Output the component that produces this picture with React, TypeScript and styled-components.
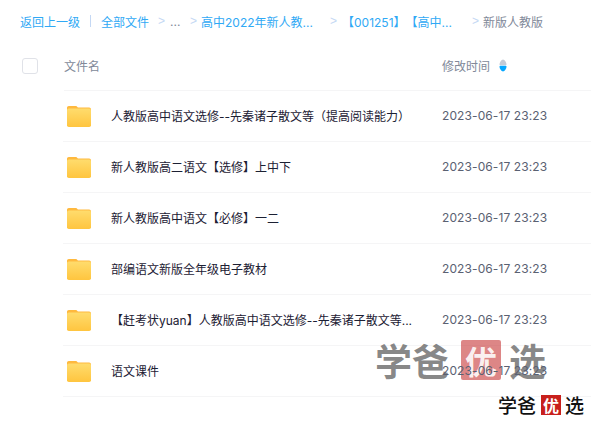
import React from "react";
import styled, { createGlobalStyle } from "styled-components";

const Global = createGlobalStyle`
  html, body { margin: 0; padding: 0; background: #fff; }
  body { font-family: "Inter", "Noto Sans CJK SC", sans-serif; width: 591px; height: 421px; overflow: hidden; text-spacing-trim: space-all; font-feature-settings: "chws" 0, "halt" 0; }
`;
const Page = styled.div`position: relative; width: 591px; height: 421px; overflow: hidden;`;
const Crumbs = styled.nav`
  display: flex; align-items: center; height: 42px; padding-left: 20px; font-size: 12px; white-space: nowrap;
`;
const CrumbLink = styled.span<{ $w: number; $muted?: boolean }>`
  width: ${p => p.$w}px; flex: none; color: ${p => (p.$muted ? "#818999" : "#30a9f5")}; overflow: hidden;
`;
const Bar = styled.span`width: 1px; height: 12px; background: #c4d8f4; margin: 0 10px 0 10px; flex: none;`;
const Sep = styled.span<{ $w: number }>`width: ${p => p.$w}px; flex: none; color: #c4d8f4; font-size: 12px; font-family: "Liberation Sans", sans-serif;`;
const HeaderRow = styled.div`display: flex; align-items: center; height: 49px; padding-left: 22px;`;
const Check = styled.span`
  width: 14px; height: 14px; border: 1px solid #e0e2e8; border-radius: 3px; flex: none; margin: 0 26px 2px 0;
`;
const HeadCell = styled.div<{ $w?: number }>`
  display: flex; align-items: center; height: 46px; padding-bottom: 2px; font-size: 12px; color: #818999;
  flex: ${p => (p.$w ? "none" : "1")}; width: ${p => (p.$w ? `${p.$w}px` : "auto")};
  border-bottom: 1px solid #f5f5f6;
`;
const Sort = styled.svg`width: 8px; height: 13px; margin-left: 9px; margin-top: 1px;`;
const Row = styled.div`
  display: flex; align-items: center; height: 49px; padding-bottom: 1px; margin-left: 63px; border-bottom: 1px solid #f5f5f6; font-size: 12px;
`;
const Folder = styled.svg`width: 24px; height: 21px; flex: none; margin: 1px 20px 0 4px;`;
const Name = styled.div`width: 331px; flex: none; color: #1c2033; white-space: nowrap; overflow: hidden;`;
const Time = styled.div`position: relative; z-index: 1; color: #5a6172; letter-spacing: 0.1px; white-space: nowrap;`;
const MarkBig = styled.div`
  position: absolute; left: 375px; top: 340px; display: flex; align-items: center;
  font-family: "Noto Sans CJK SC", sans-serif; font-size: 37px; font-weight: 700; line-height: 40px; color: rgba(90,90,90,0.72);
`;
const SealBig = styled.span`
  width: 40px; height: 40px; background: rgba(200,60,60,0.62); color: rgba(255,255,255,0.9); border-radius: 2px;
  display: flex; align-items: center; justify-content: center; font-size: 32px; margin: 0 8px 0 12px;
`;
const MarkSmall = styled.div`
  position: absolute; left: 498px; top: 394px; display: flex; align-items: center;
  font-family: "Noto Sans CJK SC", sans-serif; font-size: 19px; font-weight: 500; line-height: 22px; color: #111;
`;
const SealSmall = styled.span`
  width: 20px; height: 20px; background: #c8201c; color: #fff; font-size: 16px; font-weight: 700;
  display: flex; align-items: center; justify-content: center; margin: 0 4px 0 5px;
`;

const FolderIcon = () => (
  <Folder viewBox="0 0 24 21">
    <defs>
      <linearGradient id="fg" x1="0" y1="0" x2="0" y2="1">
        <stop offset="0" stopColor="#ffdc6d" />
        <stop offset="1" stopColor="#ffc53f" />
      </linearGradient>
    </defs>
    <path d="M1.8 0h6.7c1.2 0 1.7.6 2.4 1.5h11.3C23.2 1.5 24 2.3 24 3.5V8H0V1.8C0 .8.8 0 1.8 0z" fill="#ffb93e" />
    <rect x="0" y="2.5" width="24" height="18.5" rx="1.8" fill="url(#fg)" />
  </Folder>
);

const names = [
  "人教版高中语文选修--先秦诸子散文等（提高阅读能力）",
  "新人教版高二语文【选修】上中下",
  "新人教版高中语文【必修】一二",
  "部编语文新版全年级电子教材",
  "【赶考状yuan】人教版高中语文选修--先秦诸子散文等...",
  "语文课件",
];

export default function App() {
  return (
    <Page>
      <Global />
      <Crumbs>
        <CrumbLink $w={60}>返回上一级</CrumbLink>
        <Bar />
        <CrumbLink $w={57}>全部文件</CrumbLink>
        <Sep $w={12}>&gt;</Sep>
        <CrumbLink $w={20} $muted>...</CrumbLink>
        <Sep $w={11}>&gt;</Sep>
        <CrumbLink $w={129}>高中2022年新人教...</CrumbLink>
        <Sep $w={12}>&gt;</Sep>
        <CrumbLink $w={130}>【001251】【高中...</CrumbLink>
        <Sep $w={11}>&gt;</Sep>
        <CrumbLink $w={70} $muted>新版人教版</CrumbLink>
      </Crumbs>
      <HeaderRow>
        <Check />
        <HeadCell $w={378}>文件名</HeadCell>
        <HeadCell>
          修改时间
          <Sort viewBox="0 0 8 13">
            <path d="M4 0.5C5.5 0.5 7.5 3.5 7.5 5.5c0 .5-.3.7-.8.7H1.3c-.5 0-.8-.2-.8-.7C.5 3.5 2.5.5 4 .5z" fill="#c4cad6" />
            <path d="M4 12.5C5.5 12.5 7.5 9.5 7.5 7.5c0-.5-.3-.7-.8-.7H1.3c-.5 0-.8.2-.8.7C.5 9.5 2.5 12.5 4 12.5z" fill="#06a7ff" />
          </Sort>
        </HeadCell>
      </HeaderRow>
      {names.map(n => (
        <Row key={n}>
          <FolderIcon />
          <Name>{n}</Name>
          <Time>2023-06-17 23:23</Time>
        </Row>
      ))}
      <MarkBig>
        学爸<SealBig>优</SealBig>选
      </MarkBig>
      <MarkSmall>
        学爸<SealSmall>优</SealSmall>选
      </MarkSmall>
    </Page>
  );
}
